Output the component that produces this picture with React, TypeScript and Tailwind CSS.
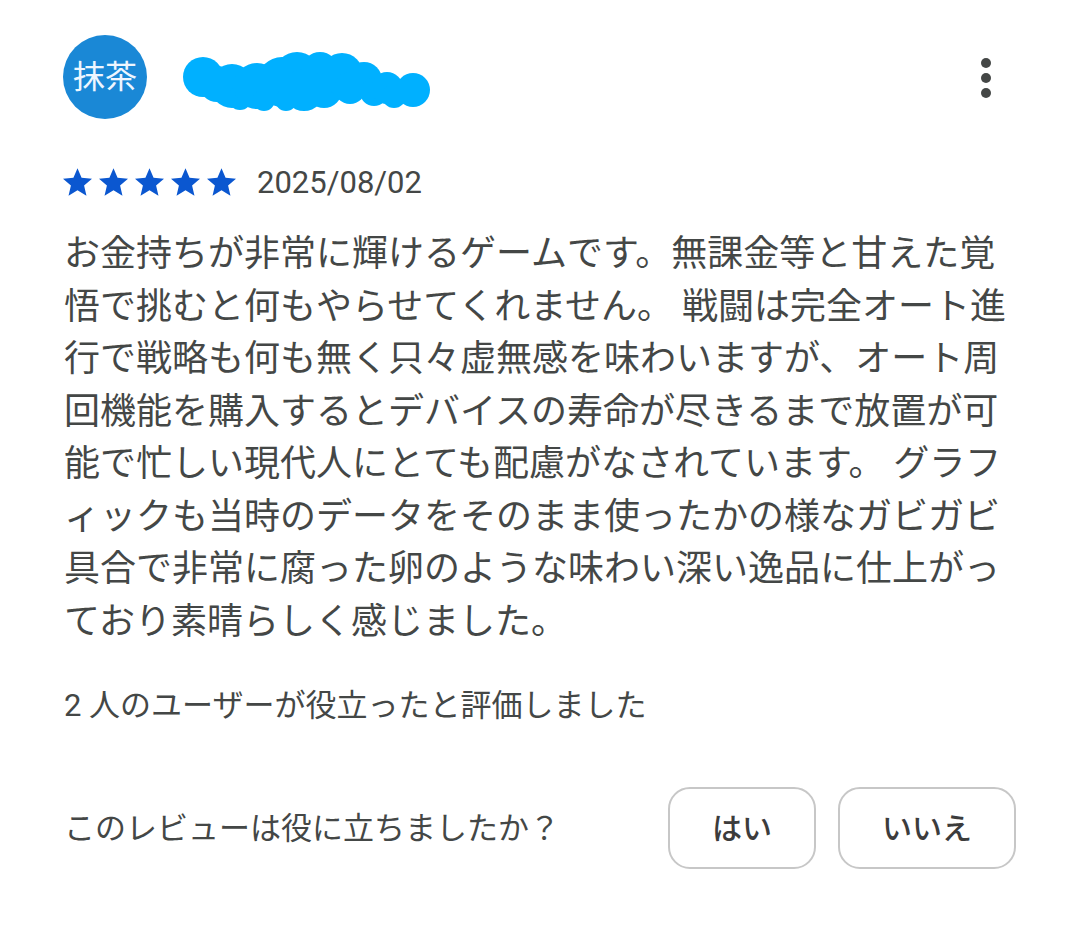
import React from "react";

const lines = [
  "お金持ちが非常に輝けるゲームです。無課金等と甘えた覚",
  "悟で挑むと何もやらせてくれません。 戦闘は完全オート進",
  "行で戦略も何も無く只々虚無感を味わいますが、オート周",
  "回機能を購入するとデバイスの寿命が尽きるまで放置が可",
  "能で忙しい現代人にとても配慮がなされています。 グラフ",
  "ィックも当時のデータをそのまま使ったかの様なガビガビ",
  "具合で非常に腐った卵のような味わい深い逸品に仕上がっ",
  "ており素晴らしく感じました。",
];

const blobs: [number, number, number][] = [
  [201, 77, 20],
  [215, 84, 18],
  [230, 86, 22],
  [238, 98, 12],
  [255, 86, 23],
  [262, 100, 11],
  [280, 82, 25],
  [284, 100, 11],
  [295, 75, 23],
  [302, 90, 21],
  [318, 70, 18],
  [322, 90, 18],
  [340, 74, 21],
  [348, 88, 16],
  [362, 80, 18],
  [372, 92, 14],
  [385, 88, 16],
  [392, 96, 12],
  [411, 90, 17],
];

function Star() {
  return (
    <svg width="29" height="28" viewBox="2 2 20 19" className="block">
      <path
        d="M12 17.27L18.18 21l-1.64-7.03L22 9.24l-7.19-.61L12 2 9.19 8.63 2 9.24l5.46 4.73L5.82 21z"
        fill="#0b57d0"
      />
    </svg>
  );
}

export default function App() {
  return (
    <div
      className="w-[1080px] h-[932px] bg-white overflow-hidden text-[#444746]"
      style={{ fontFamily: 'Roboto, "Noto Sans CJK JP", sans-serif' }}
    >
      <div className="pl-[63px] pr-[89px] pt-[35px]">
        {/* Header */}
        <div className="flex items-center h-[84px]">
          <div className="w-[84px] h-[84px] rounded-full bg-[#1a88d6] flex items-center justify-center shrink-0">
            <span className="text-[32px] leading-none text-[#eef6ff]">抹茶</span>
          </div>
          <svg
            width="250"
            height="64"
            viewBox="180 50 250 64"
            className="ml-[35px] mt-[10px] block"
          >
            {blobs.map(([cx, cy, r], i) => (
              <circle key={i} cx={cx} cy={cy} r={r} fill="#00b0ff" />
            ))}
          </svg>
          <div className="ml-auto flex flex-col gap-[5px] mt-[2px]">
            <div className="w-[10px] h-[10px] rounded-full bg-[#444746]" />
            <div className="w-[10px] h-[10px] rounded-full bg-[#444746]" />
            <div className="w-[10px] h-[10px] rounded-full bg-[#444746]" />
          </div>
        </div>

        {/* Rating row */}
        <div className="flex items-center mt-[48px] h-[30px]">
          <div className="flex gap-[7px]">
            <Star />
            <Star />
            <Star />
            <Star />
            <Star />
          </div>
          <span className="ml-[21px] text-[31px] leading-none">2025/08/02</span>
        </div>

        {/* Body */}
        <div className="mt-[31px] ml-[1px] text-[36px] leading-[52.5px]">
          {lines.map((l, i) => (
            <div key={i} className="whitespace-nowrap">
              {l}
            </div>
          ))}
        </div>

        {/* Helpful count */}
        <div className="mt-[40px] ml-[1px] text-[31px] leading-[36px] whitespace-nowrap">
          2 人のユーザーが役立ったと評価しました
        </div>

        {/* Question row */}
        <div className="mt-[63px] flex items-center">
          <span className="ml-[1px] text-[31px] leading-none whitespace-nowrap">
            このレビューは役に立ちましたか？
          </span>
          <div className="ml-auto mr-[-25px] flex gap-[22px]">
            <button className="w-[148px] h-[82px] rounded-[22px] border-2 border-[#c7c7c7] bg-white text-[30px] font-medium text-[#3c3c3c] flex items-center justify-center">
              はい
            </button>
            <button className="w-[178px] h-[82px] rounded-[22px] border-2 border-[#c7c7c7] bg-white text-[30px] font-medium text-[#3c3c3c] flex items-center justify-center">
              いいえ
            </button>
          </div>
        </div>
      </div>
    </div>
  );
}
